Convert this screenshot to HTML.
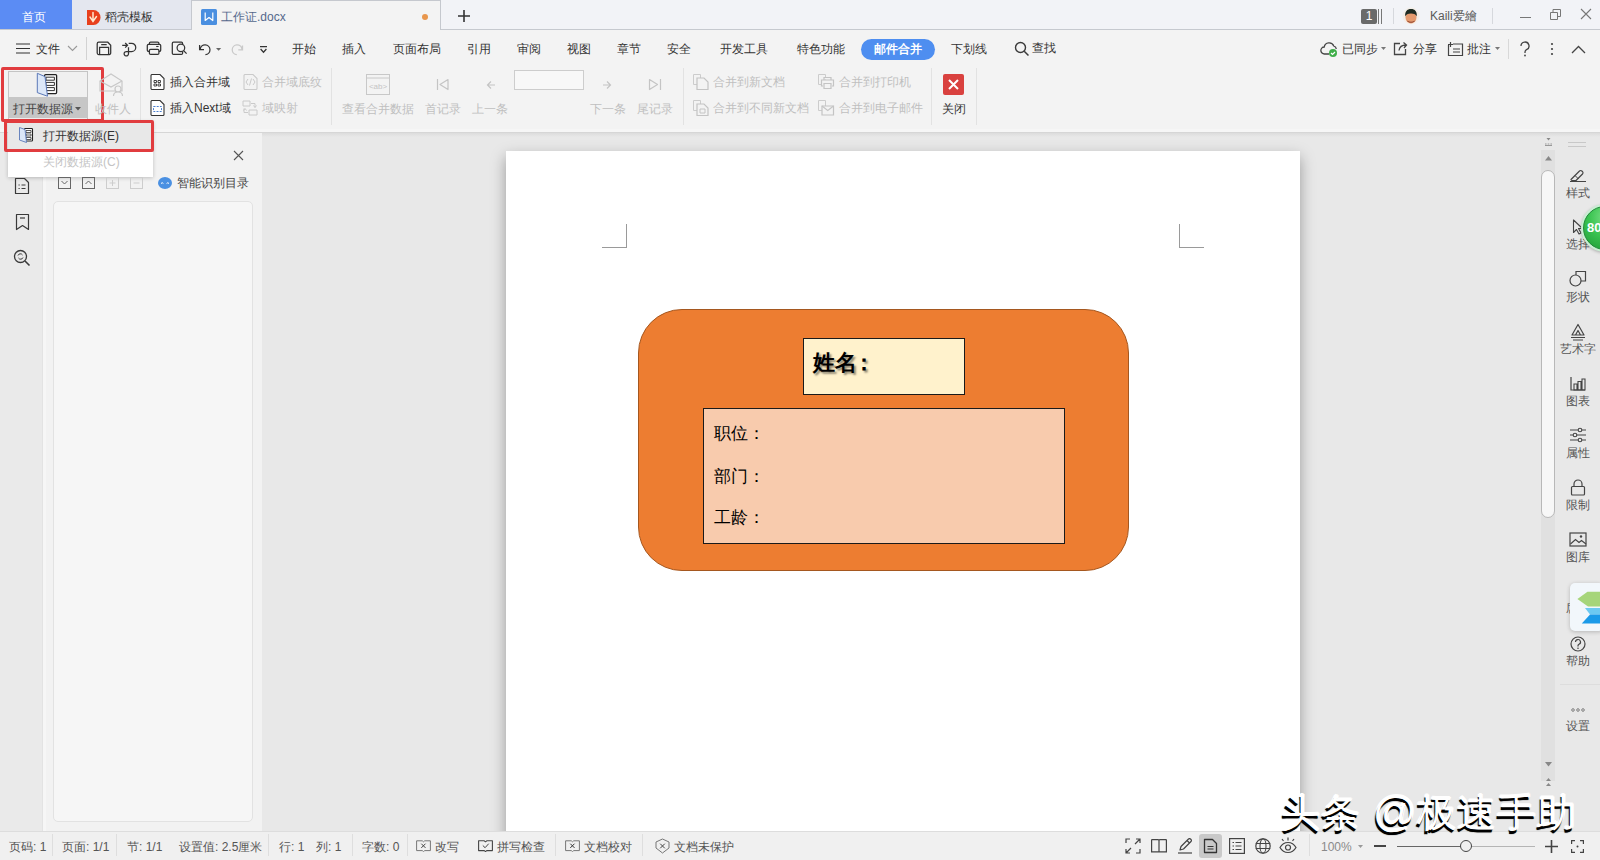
<!DOCTYPE html>
<html><head><meta charset="utf-8">
<style>
*{margin:0;padding:0;box-sizing:border-box}
html,body{width:1600px;height:860px;overflow:hidden;background:#f3f3f3;font-family:"Liberation Sans",sans-serif;color:#333}
.a{position:absolute}
.t{position:absolute;white-space:nowrap;font-size:12px;line-height:14px}
#tabbar{left:0;top:0;width:1600px;height:30px;background:#f2f3f7;border-bottom:1px solid #c6c9cf}
#home{left:0;top:0;width:72px;height:29px;background:#5b8cf4}
#tab2{left:72px;top:0;width:120px;height:29px;background:#e4e7ef}
#tab3{left:191px;top:0;width:250px;height:30px;background:#f3f3f3;border-left:1px solid #c5c8ce;border-right:1px solid #c5c8ce;border-top:1px solid #c5c8ce}
#tool{left:0;top:30px;width:1600px;height:103px;background:#f3f3f3;border-bottom:1px solid #d6d6d6;box-shadow:inset 0 -3px 0 #f6f6f6}
#toolsh{left:262px;top:133px;width:1338px;height:4px;background:linear-gradient(#dcdcdc,rgba(230,230,230,0))}
#lstrip{left:0;top:133px;width:43px;height:698px;background:#eaeaea;border-right:1px solid #e3e3e3}
#nav{left:43px;top:133px;width:219px;height:698px;background:#f2f2f2;box-shadow:inset 3px 0 0 #f6f6f6}
#navbox{left:53px;top:201px;width:200px;height:621px;background:#f6f6f6;border:1px solid #e2e2e2;border-radius:5px}
#doc{left:262px;top:133px;width:1338px;height:698px;background:#e8e8e8}
#page{left:506px;top:151px;width:794px;height:700px;background:#fff;box-shadow:0 6px 14px rgba(0,0,0,.34)}
#scroll{left:1540px;top:132px;width:18px;height:699px;background:#e6e6e6}
#rpanel{left:1558px;top:132px;width:42px;height:699px;background:#f0f0f0;border-left:1px solid #dedede}
#status{left:0;top:831px;width:1600px;height:29px;background:#f0f0f0;border-top:1px solid #dddddd}
.g{color:#bbb}
</style></head><body>
<div id="tool" class="a"></div>
<div id="lstrip" class="a"></div>
<div id="nav" class="a"></div>
<div id="navbox" class="a"></div>
<div id="doc" class="a"></div>
<div id="page" class="a"></div>
<div id="toolsh" class="a"></div>
<div id="status" class="a"></div>
<!-- TAB BAR -->
<div id="tabbar" class="a"></div>
<div id="home" class="a"></div>
<div class="t" style="left:22px;top:10px;font-size:12px;color:#fff">首页</div>
<div id="tab2" class="a"></div>
<svg class="a" style="left:87px;top:10px" width="14" height="15" viewBox="0 0 14 15"><path d="M0 0h6.5a7 7.5 0 0 1 0 15H0z" fill="#e8401c"/><path d="M6 2.5v8M3 7l3 4.5 3.5-5" stroke="#ffe9cf" stroke-width="1.5" fill="none" stroke-linecap="round"/></svg>
<div class="t" style="left:105px;top:10px;font-size:12px;color:#333">稻壳模板</div>
<div id="tab3" class="a"></div>
<svg class="a" style="left:201px;top:9px" width="16" height="16" viewBox="0 0 16 16"><rect x="0" y="0" width="16" height="16" rx="1.5" fill="#4a8fe0"/><path d="M4.2 3.5v8L8 8.5l3.8 3v-8" stroke="#fff" stroke-width="1.2" fill="none" stroke-linejoin="round"/></svg>
<div class="t" style="left:221px;top:10px;font-size:12px;color:#55688c">工作证.docx</div>
<div class="a" style="left:422px;top:14px;width:6px;height:6px;border-radius:50%;background:#e8964c"></div>
<svg class="a" style="left:457px;top:9px" width="14" height="14" viewBox="0 0 14 14"><path d="M7 1v12M1 7h12" stroke="#333" stroke-width="1.6"/></svg>
<!-- right tab bar -->
<div class="a" style="left:1361px;top:9px;width:16px;height:15px;background:#6a6a6a;border-radius:2px;color:#fff;font-size:12px;line-height:15px;text-align:center">1</div>
<div class="a" style="left:1378px;top:9px;width:1px;height:15px;background:#777"></div>
<div class="a" style="left:1381px;top:9px;width:1px;height:15px;background:#777"></div>
<div class="a" style="left:1393px;top:8px;width:1px;height:16px;background:#d6d8dd"></div>
<svg class="a" style="left:1402px;top:7px" width="18" height="18" viewBox="0 0 18 18"><circle cx="9" cy="9" r="8.5" fill="#f4eee8"/><ellipse cx="9" cy="10.5" rx="5.5" ry="6" fill="#e49a6e"/><path d="M3.2 9.5C2.8 4.5 5 2 9 2s6.2 2.5 5.8 7.5c-.8-2-2.5-3-5.8-3s-5 1-5.8 3z" fill="#1d2a22"/><path d="M5 13.5c1.2 2.8 6.8 2.8 8 0c-1 1-2.5 1.2-4 1.2s-3-.2-4-1.2z" fill="#6e2218"/></svg>
<div class="t" style="left:1430px;top:9px;font-size:12px;color:#5a5a5a">Kaili爱繪</div>
<div class="a" style="left:1492px;top:8px;width:1px;height:16px;background:#d6d8dd"></div>
<div class="a" style="left:1520px;top:17px;width:11px;height:1px;background:#777"></div>
<svg class="a" style="left:1549px;top:8px" width="13" height="13" viewBox="0 0 13 13"><path d="M1.5 4.5h7v7h-7zM4 4.5V1.5h7.5v7H8.5" stroke="#777" stroke-width="1" fill="none"/></svg>
<svg class="a" style="left:1580px;top:8px" width="12" height="12" viewBox="0 0 12 12"><path d="M1 1l10 10M11 1 1 11" stroke="#777" stroke-width="1.1"/></svg>
<!-- MENU ROW -->
<svg class="a" style="left:16px;top:43px" width="14" height="11" viewBox="0 0 14 11"><path d="M0 1h14M0 5.5h14M0 10h14" stroke="#333" stroke-width="1.2"/></svg>
<div class="t" style="left:36px;top:42px;color:#333">文件</div>
<svg class="a" style="left:67px;top:45px" width="11" height="7" viewBox="0 0 11 7"><path d="M1 1l4.5 4.5L10 1" stroke="#999" stroke-width="1.1" fill="none"/></svg>
<div class="a" style="left:86px;top:37px;width:1px;height:23px;background:#d2d2d2"></div>
<svg class="a" style="left:90px;top:36px" width="190" height="24" viewBox="90 36 190 24" fill="none" stroke="#333" stroke-width="1.25">
<path d="M97.2 43.7a1.5 1.5 0 0 1 1.5-1.5H107.8L110.7 45.3V53a1.5 1.5 0 0 1-1.5 1.5H98.7a1.5 1.5 0 0 1-1.5-1.5z"/><path d="M101.2 44.6H106.7M99.6 54.5V47.4H108.6V54.5"/>
<path d="M122.2 45.3H127.4M125.2 43 127.5 45.3 125.2 47.6"/><path d="M128.7 43.3H131.6A4.15 4.15 0 0 1 131.6 51.6H126.6A2.2 2.2 0 1 0 128.5 54V47.2"/>
<path d="M149.4 44.4V43.4a1.2 1.2 0 0 1 1.2-1.2H157.7a1.2 1.2 0 0 1 1.2 1.2V44.4"/><path d="M149.3 51.3H148.5a1.2 1.2 0 0 1-1.2-1.2V45.6a1.2 1.2 0 0 1 1.2-1.2H159.5a1.2 1.2 0 0 1 1.2 1.2V50.1a1.2 1.2 0 0 1-1.2 1.2H158.9"/><rect x="149.4" y="49.4" width="9.5" height="5" rx="1.2"/><path d="M156.2 46.5H158.6" stroke-width="1.1"/>
<path d="M182.6 44.5V43.4a1.2 1.2 0 0 0-1.2-1.2H173.5a1.2 1.2 0 0 0-1.2 1.2V53.2a1.2 1.2 0 0 0 1.2 1.2H181.4a1.2 1.2 0 0 0 1.2-1.2V52"/><circle cx="180.9" cy="47.8" r="3.8"/><path d="M183.6 50.6 186.6 53.6"/>
<path d="M199.6 45V49.7H204"/><path d="M200.2 49.2A4.9 4.9 0 1 1 205.4 54.6"/>
<path d="M216 48H221.2L218.6 50.8z" fill="#666" stroke="none"/>
<path d="M242.5 45.5V49.9H238.3M242 49.2A4.9 4.9 0 1 0 236.8 54.6" stroke="#c9c9c9"/>
<path d="M260 46.5H267M260.6 49 263.5 52.2 266.4 49"/>
</svg>
<div class="t" style="left:292px;top:42px">开始</div>
<div class="t" style="left:342px;top:42px">插入</div>
<div class="t" style="left:393px;top:42px">页面布局</div>
<div class="t" style="left:467px;top:42px">引用</div>
<div class="t" style="left:517px;top:42px">审阅</div>
<div class="t" style="left:567px;top:42px">视图</div>
<div class="t" style="left:617px;top:42px">章节</div>
<div class="t" style="left:667px;top:42px">安全</div>
<div class="t" style="left:720px;top:42px">开发工具</div>
<div class="t" style="left:797px;top:42px">特色功能</div>
<div class="a" style="left:861px;top:39px;width:74px;height:21px;border-radius:11px;background:#4e8ef0"></div>
<div class="t" style="left:874px;top:42px;color:#fff;font-weight:bold">邮件合并</div>
<div class="t" style="left:951px;top:42px">下划线</div>
<svg class="a" style="left:1014px;top:41px" width="16" height="16" viewBox="0 0 16 16"><circle cx="6.5" cy="6.5" r="5" stroke="#3a3a3a" stroke-width="1.4" fill="none"/><path d="M10.2 10.2l4.3 4.3" stroke="#3a3a3a" stroke-width="1.5"/></svg>
<div class="t" style="left:1032px;top:41px">查找</div>
<!-- right -->
<svg class="a" style="left:1320px;top:41px" width="18" height="16" viewBox="0 0 18 16"><path d="M9 13H4.5a3.5 3.5 0 0 1-.3-7A5 5 0 0 1 13.8 5a3.5 3.5 0 0 1 2.5 3" stroke="#444" stroke-width="1.3" fill="none"/><circle cx="13" cy="12" r="4" fill="#3fae49"/><path d="M11 12l1.5 1.5 2.5-2.5" stroke="#fff" stroke-width="1.2" fill="none"/></svg>
<div class="t" style="left:1342px;top:42px">已同步</div>
<svg class="a" style="left:1381px;top:47px" width="5" height="4" viewBox="0 0 5 4"><path d="M0 0h5L2.5 3z" fill="#777"/></svg>
<svg class="a" style="left:1393px;top:41px" width="16" height="15" viewBox="0 0 16 15"><path d="M7 2.5H1.5v11h11V8" stroke="#444" stroke-width="1.3" fill="none"/><path d="M6 9.5C6.5 5.5 9 4 13 4M10.5 1.5 13.5 4 11 7" stroke="#444" stroke-width="1.3" fill="none"/></svg>
<div class="t" style="left:1413px;top:42px">分享</div>
<svg class="a" style="left:1447px;top:41px" width="17" height="16" viewBox="0 0 17 16"><path d="M1.5 4v10.5h14V3H6M3.5 1v5M1 3.5h5M6 8h7M6 11h7" stroke="#444" stroke-width="1.2" fill="none"/></svg>
<div class="t" style="left:1467px;top:42px">批注</div>
<svg class="a" style="left:1495px;top:47px" width="5" height="4" viewBox="0 0 5 4"><path d="M0 0h5L2.5 3z" fill="#777"/></svg>
<div class="a" style="left:1508px;top:39px;width:1px;height:20px;background:#d8d8d8"></div>
<svg class="a" style="left:1519px;top:41px" width="12" height="16" viewBox="0 0 12 16"><path d="M2 5a4 4 0 1 1 5.5 3.7c-1 .5-1.5 1.2-1.5 2.3v1" stroke="#444" stroke-width="1.3" fill="none"/><circle cx="6" cy="14.5" r=".9" fill="#444"/></svg>
<svg class="a" style="left:1550px;top:42px" width="4" height="14" viewBox="0 0 4 14"><circle cx="2" cy="2" r="1.1" fill="#444"/><circle cx="2" cy="7" r="1.1" fill="#444"/><circle cx="2" cy="12" r="1.1" fill="#444"/></svg>
<svg class="a" style="left:1571px;top:45px" width="15" height="9" viewBox="0 0 15 9"><path d="M1 8l6.5-6.5L14 8" stroke="#444" stroke-width="1.3" fill="none"/></svg>
<!-- RIBBON -->
<div class="a" style="left:8px;top:71px;width:80px;height:48px;background:#f0f0f0;border:1px solid #c4c4c4;border-bottom:none"></div>
<div class="a" style="left:9px;top:97px;width:78px;height:21px;background:#c6c6c6"></div>
<svg class="a" style="left:30px;top:68px" width="36" height="32" viewBox="0 0 36 32"><rect x="14.6" y="6.6" width="12" height="19" rx="1" stroke="#222" stroke-width="1.3" fill="#fff"/><path d="M16 9.2h8.4v3H16zM16 14.4h8.4v3H16zM16 19.6h8.4v3H16z" stroke="#333" stroke-width="1" fill="none"/><path d="M7.3 5.3 15 8.6l2.5 19.6-10.2-3.6z" fill="#dce7f8" stroke="#5a78b8" stroke-width="1"/></svg>
<div class="t" style="left:13px;top:102px;color:#444">打开数据源</div>
<svg class="a" style="left:75px;top:107px" width="6" height="4" viewBox="0 0 6 4"><path d="M0 0h6L3 3.5z" fill="#555"/></svg>
<div class="a" style="left:1px;top:67px;width:103px;height:55px;border:3px solid #e13c3f;border-radius:2px"></div>
<!-- recipient gray -->
<svg class="a" style="left:98px;top:71px" width="26" height="26" viewBox="0 0 26 26"><path d="M2 10l11-7 11 7v10H2z" stroke="#c8c8c8" stroke-width="1.2" fill="none"/><path d="M2 10l11 6 11-6" stroke="#c8c8c8" stroke-width="1.2" fill="none"/><circle cx="20" cy="18" r="3" stroke="#c8c8c8" stroke-width="1.2" fill="#f3f3f3"/><path d="M15.5 25c0-2.5 2-4 4.5-4s4.5 1.5 4.5 4" stroke="#c8c8c8" stroke-width="1.2" fill="#f3f3f3"/></svg>
<div class="t" style="left:95px;top:102px;color:#c0c0c0">收件人</div>
<div class="a" style="left:140px;top:68px;width:1px;height:57px;background:#e2e2e2"></div>
<!-- insert merge field -->
<svg class="a" style="left:150px;top:74px" width="15" height="16" viewBox="0 0 15 16"><path d="M1 1.5a1 1 0 0 1 1-1h8l4 4v10a1 1 0 0 1-1 1H2a1 1 0 0 1-1-1z" stroke="#333" stroke-width="1.1" fill="#fff"/><path d="M4 6.5h2.5v2H4zM8 6.5h2.5v2H8zM4 10h2.5v2H4zM8 10h2.5v2H8z" stroke="#333" stroke-width=".9" fill="none"/></svg>
<div class="t" style="left:170px;top:75px">插入合并域</div>
<svg class="a" style="left:150px;top:100px" width="15" height="16" viewBox="0 0 15 16"><path d="M1 1.5a1 1 0 0 1 1-1h8l4 4v10a1 1 0 0 1-1 1H2a1 1 0 0 1-1-1z" stroke="#333" stroke-width="1.1" fill="#fff"/><path d="M3.5 6.5h8v5h-8z" stroke="#4a7fcf" stroke-width="1" stroke-dasharray="2 1.2" fill="none"/></svg>
<div class="t" style="left:170px;top:101px">插入Next域</div>
<svg class="a" style="left:243px;top:74px" width="15" height="16" viewBox="0 0 15 16"><path d="M1 1.5a1 1 0 0 1 1-1h8l4 4v10a1 1 0 0 1-1 1H2a1 1 0 0 1-1-1z" stroke="#cacaca" stroke-width="1.1" fill="none"/><path d="M5 5 3 8l2 3M10 5l2 3-2 3M8.5 4.5l-2 7" stroke="#cacaca" stroke-width="1" fill="none"/></svg>
<div class="t" style="left:262px;top:75px;color:#bfbfbf">合并域底纹</div>
<svg class="a" style="left:242px;top:100px" width="16" height="16" viewBox="0 0 16 16"><path d="M1 1h7v5H1zM7 10h8v5H7zM9 3.5h4v4M11.5 5.5 13 7.5l1.5-2M6 12.5H2v-4M4.5 10.5 3 8.5l-1.5 2" stroke="#cacaca" stroke-width="1" fill="none"/></svg>
<div class="t" style="left:262px;top:101px;color:#bfbfbf">域映射</div>
<div class="a" style="left:331px;top:68px;width:1px;height:57px;background:#e2e2e2"></div>
<svg class="a" style="left:366px;top:74px" width="24" height="21" viewBox="0 0 24 21"><rect x=".5" y=".5" width="23" height="20" stroke="#c8c8c8" stroke-width="1" fill="none"/><path d="M.5 4h23" stroke="#c8c8c8"/><text x="12" y="15" font-size="8" text-anchor="middle" fill="#c4c4c4" font-family="Liberation Sans">&lt;ab&gt;</text></svg>
<div class="t" style="left:342px;top:102px;color:#bfbfbf">查看合并数据</div>
<svg class="a" style="left:436px;top:78px" width="13" height="13" viewBox="0 0 13 13"><path d="M1.5 1v11M12 1.5 4 6.5l8 5z" stroke="#c4c4c4" stroke-width="1.2" fill="none" stroke-linejoin="round"/></svg>
<div class="t" style="left:425px;top:102px;color:#bfbfbf">首记录</div>
<svg class="a" style="left:486px;top:80px" width="10" height="10" viewBox="0 0 10 10"><path d="M9 5H1.5M5 1.5 1.5 5 5 8.5" stroke="#c4c4c4" stroke-width="1.2" fill="none"/></svg>
<div class="t" style="left:472px;top:102px;color:#bfbfbf">上一条</div>
<div class="a" style="left:514px;top:70px;width:70px;height:20px;background:#f8f8f8;border:1px solid #cdcdcd"></div>
<svg class="a" style="left:602px;top:80px" width="10" height="10" viewBox="0 0 10 10"><path d="M1 5h7.5M5 1.5 8.5 5 5 8.5" stroke="#c4c4c4" stroke-width="1.2" fill="none"/></svg>
<div class="t" style="left:590px;top:102px;color:#bfbfbf">下一条</div>
<svg class="a" style="left:648px;top:78px" width="14" height="13" viewBox="0 0 14 13"><path d="M12.5 1v11M1.5 1.5l8 5-8 5z" stroke="#c4c4c4" stroke-width="1.2" fill="none" stroke-linejoin="round"/></svg>
<div class="t" style="left:637px;top:102px;color:#bfbfbf">尾记录</div>
<div class="a" style="left:683px;top:68px;width:1px;height:57px;background:#e2e2e2"></div>
<svg class="a" style="left:692px;top:73px" width="18" height="17" viewBox="0 0 18 17"><path d="M1.5 1.5h7v10h-7z" stroke="#cccccc" stroke-width="1" fill="none"/><path d="M5 5h7l4 4v7.5H5z" stroke="#c4c4c4" stroke-width="1.2" fill="#f3f3f3"/></svg>
<div class="t" style="left:713px;top:75px;color:#bfbfbf">合并到新文档</div>
<svg class="a" style="left:692px;top:99px" width="18" height="17" viewBox="0 0 18 17"><path d="M1.5 1.5h7v10h-7z" stroke="#cccccc" stroke-width="1" fill="none"/><path d="M5 5h7l4 4v7.5H5z" stroke="#c4c4c4" stroke-width="1.2" fill="#f3f3f3"/><path d="M8 10h5v4H8z" stroke="#c4c4c4" fill="none"/></svg>
<div class="t" style="left:713px;top:101px;color:#bfbfbf">合并到不同新文档</div>
<svg class="a" style="left:817px;top:73px" width="18" height="17" viewBox="0 0 18 17"><path d="M1.5 1.5h7v10h-7z" stroke="#cccccc" stroke-width="1" fill="none"/><path d="M7 6.5v-2h7v2M6 13H4.5V7h12v6H15M7 10.5h7v5H7z" stroke="#c4c4c4" stroke-width="1.2" fill="#f3f3f3"/></svg>
<div class="t" style="left:839px;top:75px;color:#bfbfbf">合并到打印机</div>
<svg class="a" style="left:817px;top:99px" width="18" height="17" viewBox="0 0 18 17"><path d="M1.5 1.5h7v10h-7z" stroke="#cccccc" stroke-width="1" fill="none"/><path d="M5 7h11.5v9H5z" stroke="#c4c4c4" stroke-width="1.2" fill="#f3f3f3"/><path d="M5 7l5.75 4.5L16.5 7" stroke="#c4c4c4" stroke-width="1.1" fill="none"/></svg>
<div class="t" style="left:839px;top:101px;color:#bfbfbf">合并到电子邮件</div>
<div class="a" style="left:931px;top:68px;width:1px;height:57px;background:#e2e2e2"></div>
<div class="a" style="left:943px;top:74px;width:21px;height:21px;background:#d9413f;border-radius:2px"></div>
<svg class="a" style="left:947px;top:78px" width="13" height="13" viewBox="0 0 13 13"><path d="M2 2l9 9M11 2 2 11" stroke="#fff" stroke-width="2"/></svg>
<div class="t" style="left:942px;top:102px">关闭</div>
<div class="a" style="left:976px;top:68px;width:1px;height:57px;background:#e2e2e2"></div>
<!-- dropdown menu -->
<div class="a" style="left:8px;top:121px;width:145px;height:56px;background:#fff;box-shadow:0 1px 4px rgba(0,0,0,.22)"></div>
<div class="a" style="left:8px;top:123px;width:145px;height:26px;background:#e8e8e8"></div>
<svg class="a" style="left:17px;top:126px" width="18" height="18" viewBox="0 0 18 18"><rect x="7.5" y="2.5" width="8" height="12.5" rx=".8" stroke="#222" stroke-width="1.1" fill="#fff"/><path d="M9 4.5h5v2H9zM9 8h5v2H9zM9 11.5h5v2H9z" stroke="#333" stroke-width=".8" fill="none"/><path d="M2.5 1.5 8 3.5l1.5 13-7-2.5z" fill="#dce7f8" stroke="#5a78b8" stroke-width=".9"/></svg>
<div class="t" style="left:43px;top:129px;color:#333">打开数据源(E)</div>
<div class="t" style="left:43px;top:155px;color:#c4c4c4">关闭数据源(C)</div>
<div class="a" style="left:4px;top:120px;width:150px;height:32px;border:3px solid #e13c3f;border-radius:2px"></div>
<!-- LEFT STRIP ICONS -->
<svg class="a" style="left:14px;top:177px" width="16" height="18" viewBox="0 0 16 18"><path d="M1.5 1.5h9l4 4v11h-13z" stroke="#3a3a3a" stroke-width="1.2" fill="none" stroke-linejoin="round"/><path d="M4.5 8h1.2M4.5 11.5h1.2M7.5 8h4M7.5 11.5h4" stroke="#3a3a3a" stroke-width="1.2"/></svg>
<svg class="a" style="left:15px;top:213px" width="15" height="18" viewBox="0 0 15 18"><path d="M1.5 1.5h12v15l-6-4-6 4z" stroke="#3a3a3a" stroke-width="1.2" fill="none" stroke-linejoin="round"/><path d="M5 5h5" stroke="#3a3a3a" stroke-width="1.2"/></svg>
<svg class="a" style="left:13px;top:249px" width="18" height="18" viewBox="0 0 18 18"><circle cx="7.5" cy="7.5" r="6" stroke="#3a3a3a" stroke-width="1.3" fill="none"/><path d="M12 12l4.5 4.5" stroke="#3a3a3a" stroke-width="1.6"/><path d="M5 6.5a2.5 2.5 0 0 1 4.5-.5M10 8.5a2.5 2.5 0 0 1-4.5.5" stroke="#3a3a3a" stroke-width="1" fill="none"/></svg>
<!-- NAV HEADER -->
<svg class="a" style="left:233px;top:150px" width="11" height="11" viewBox="0 0 11 11"><path d="M1 1l9 9M10 1 1 10" stroke="#555" stroke-width="1.1"/></svg>
<svg class="a" style="left:58px;top:177px" width="13" height="12" viewBox="0 0 13 12"><rect x=".5" y=".5" width="12" height="11" stroke="#666" fill="none"/><path d="M3.5 4l3 3 3-3" stroke="#666" fill="none"/></svg>
<svg class="a" style="left:82px;top:177px" width="13" height="12" viewBox="0 0 13 12"><rect x=".5" y=".5" width="12" height="11" stroke="#666" fill="none"/><path d="M3.5 7l3-3 3 3" stroke="#666" fill="none"/></svg>
<svg class="a" style="left:106px;top:177px" width="13" height="12" viewBox="0 0 13 12"><rect x=".5" y=".5" width="12" height="11" stroke="#cdcdcd" fill="none"/><path d="M6.5 3v6M3.5 6h6" stroke="#cdcdcd"/></svg>
<svg class="a" style="left:130px;top:177px" width="13" height="12" viewBox="0 0 13 12"><rect x=".5" y=".5" width="12" height="11" stroke="#cdcdcd" fill="none"/><path d="M3.5 6h6" stroke="#cdcdcd"/></svg>
<svg class="a" style="left:158px;top:177px" width="14" height="12" viewBox="0 0 14 12"><ellipse cx="7" cy="6" rx="7" ry="6" fill="#4a90e2"/><path d="M3 6.5q1.2-1.5 2.4 0M8.6 6.5q1.2-1.5 2.4 0" stroke="#fff" stroke-width="1" fill="none"/></svg>
<div class="t" style="left:177px;top:176px;color:#444">智能识别目录</div>
<!-- PAGE CONTENT -->
<div class="a" style="left:626px;top:224px;width:1px;height:24px;background:#9a9a9a"></div>
<div class="a" style="left:602px;top:247px;width:25px;height:1px;background:#9a9a9a"></div>
<div class="a" style="left:1179px;top:224px;width:1px;height:24px;background:#9a9a9a"></div>
<div class="a" style="left:1179px;top:247px;width:25px;height:1px;background:#9a9a9a"></div>
<div class="a" style="left:638px;top:309px;width:491px;height:262px;background:#ed7d31;border:1px solid #a5571f;border-radius:44px"></div>
<div class="a" style="left:803px;top:338px;width:162px;height:57px;background:#fff2cc;border:1px solid #1a1a1a"></div>
<div class="t" style="left:813px;top:350px;font-size:22px;line-height:26px;font-weight:bold;color:#000;text-shadow:2px 2px 2px rgba(0,0,0,.45)">姓名<span style="margin-left:-4px">：</span></div>
<div class="a" style="left:703px;top:408px;width:362px;height:136px;background:#f8cbad;border:1px solid #1a1a1a"></div>
<div class="t" style="left:714px;top:424px;font-size:17px;line-height:20px;color:#000">职位：</div>
<div class="t" style="left:714px;top:467px;font-size:17px;line-height:20px;color:#000">部门：</div>
<div class="t" style="left:714px;top:508px;font-size:17px;line-height:20px;color:#000">工龄：</div>
<!-- SCROLLBAR -->
<div class="a" style="left:1541px;top:150px;width:14px;height:631px;background:#e0e0e0"></div>
<svg class="a" style="left:1544px;top:137px" width="9" height="10" viewBox="0 0 9 10"><path d="M2.5 1h4L4.5 3.5z" fill="#888"/><path d="M1 7h1.6M3.7 7h1.6M6.4 7H8M1 8.5h7" stroke="#999"/></svg>
<svg class="a" style="left:1545px;top:156px" width="7" height="5" viewBox="0 0 7 5"><path d="M0 4.5h7L3.5 0z" fill="#888"/></svg>
<div class="a" style="left:1541px;top:170px;width:14px;height:348px;background:#f7f7f7;border:1px solid #b8b8b8;border-radius:7px"></div>
<svg class="a" style="left:1545px;top:762px" width="7" height="5" viewBox="0 0 7 5"><path d="M0 0h7L3.5 4.5z" fill="#888"/></svg>
<svg class="a" style="left:1544px;top:777px" width="9" height="10" viewBox="0 0 9 10"><path d="M2 4h5L4.5 1z" fill="#888"/><path d="M2 9h5L4.5 6z" fill="#888"/></svg>
<!-- RIGHT PANEL -->
<div class="a" style="left:1568px;top:142px;width:18px;height:1px;background:#c8c8c8"></div>
<div class="a" style="left:1568px;top:146px;width:18px;height:1px;background:#c8c8c8"></div>
<svg class="a" style="left:1569px;top:168px" width="18" height="15" viewBox="0 0 18 15"><path d="M2 11.5 10.5 3a1.6 1.6 0 0 1 2.3 0l.7.7a1.6 1.6 0 0 1 0 2.3L7 12.5H3z" stroke="#444" stroke-width="1.2" fill="none" stroke-linejoin="round"/><path d="M1 13.5h16M6 7.5l3.5 3.5" stroke="#444" stroke-width="1"/></svg>
<div class="t" style="left:1566px;top:186px;color:#555">样式</div>
<svg class="a" style="left:1572px;top:219px" width="12" height="16" viewBox="0 0 12 16"><path d="M1.5 1v12.5l3-3 2.5 4.5 2-1-2.5-4.5h4z" stroke="#444" stroke-width="1.1" fill="none" stroke-linejoin="round"/></svg>
<div class="t" style="left:1566px;top:237px;color:#555">选择</div>
<svg class="a" style="left:1569px;top:270px" width="18" height="17" viewBox="0 0 18 17"><circle cx="6.5" cy="10.5" r="5.5" stroke="#444" stroke-width="1.2" fill="none"/><path d="M7 5V1.5h9.5V11H12" stroke="#444" stroke-width="1.2" fill="none"/></svg>
<div class="t" style="left:1566px;top:290px;color:#555">形状</div>
<svg class="a" style="left:1570px;top:323px" width="16" height="18" viewBox="0 0 16 18"><path d="M2 12 8 1.5 14 12zM5.5 12 8 7.5l2.5 4.5M1 14.5h14M3 17h10" stroke="#444" stroke-width="1.2" fill="none" stroke-linejoin="round"/></svg>
<div class="t" style="left:1560px;top:342px;color:#555">艺术字</div>
<svg class="a" style="left:1570px;top:376px" width="16" height="15" viewBox="0 0 16 15"><path d="M1 1v13h14" stroke="#444" stroke-width="1.2" fill="none"/><path d="M4 8h3v6H4zM8 5.5h3V14H8zM12 3h3v11h-3z" stroke="#444" stroke-width="1.1" fill="none"/></svg>
<div class="t" style="left:1566px;top:394px;color:#555">图表</div>
<svg class="a" style="left:1569px;top:427px" width="18" height="16" viewBox="0 0 18 16"><path d="M1 3h8M13 3h4M1 8h3M8 8h9M1 13h8M13 13h4" stroke="#444" stroke-width="1.2"/><circle cx="11" cy="3" r="1.8" stroke="#444" stroke-width="1.1" fill="none"/><circle cx="6" cy="8" r="1.8" stroke="#444" stroke-width="1.1" fill="none"/><circle cx="11" cy="13" r="1.8" stroke="#444" stroke-width="1.1" fill="none"/></svg>
<div class="t" style="left:1566px;top:446px;color:#555">属性</div>
<svg class="a" style="left:1570px;top:479px" width="16" height="17" viewBox="0 0 16 17"><path d="M4 7V5a4 4 0 0 1 8 0v2" stroke="#444" stroke-width="1.2" fill="none"/><rect x="1.5" y="7.5" width="13" height="8.5" rx="1" stroke="#444" stroke-width="1.2" fill="none"/></svg>
<div class="t" style="left:1566px;top:498px;color:#555">限制</div>
<svg class="a" style="left:1569px;top:532px" width="18" height="15" viewBox="0 0 18 15"><rect x="1" y="1" width="16" height="13" stroke="#444" stroke-width="1.2" fill="none"/><path d="M1.5 12 6.5 7.5l3.5 3 2.5-2 4.5 3.5" stroke="#444" stroke-width="1.1" fill="none"/><circle cx="12" cy="4.5" r="1.2" fill="#444"/></svg>
<div class="t" style="left:1566px;top:550px;color:#555">图库</div>
<div class="t" style="left:1566px;top:601px;color:#555">扂</div>
<div class="a" style="left:1570px;top:583px;width:34px;height:48px;background:#f2f7fb;border-radius:5px;box-shadow:0 1px 4px rgba(0,0,0,.22)"></div>
<svg class="a" style="left:1570px;top:583px" width="30" height="48" viewBox="0 0 30 48"><path d="M17.5 8.8H30v14.6H18L7.4 16z" fill="#a6d57a"/><path d="M15 25h15v6.6H20z" fill="#6cc9f2"/><path d="M20 31.6h10v8.9H11.8z" fill="#1b9ae8"/></svg>
<svg class="a" style="left:1570px;top:636px" width="16" height="16" viewBox="0 0 16 16"><circle cx="8" cy="8" r="7" stroke="#444" stroke-width="1.2" fill="none"/><path d="M5.5 6a2.5 2.5 0 1 1 3.5 2.3c-.6.3-1 .8-1 1.5v.7" stroke="#444" stroke-width="1.2" fill="none"/><circle cx="8" cy="12.2" r=".8" fill="#444"/></svg>
<div class="t" style="left:1566px;top:654px;color:#555">帮助</div>
<div class="a" style="left:1560px;top:684px;width:40px;height:1px;background:#dddddd"></div>
<svg class="a" style="left:1571px;top:708px" width="14" height="4" viewBox="0 0 14 4"><circle cx="2" cy="2" r="1.3" stroke="#666" stroke-width=".8" fill="none"/><circle cx="7" cy="2" r="1.3" stroke="#666" stroke-width=".8" fill="none"/><circle cx="12" cy="2" r="1.3" stroke="#666" stroke-width=".8" fill="none"/></svg>
<div class="t" style="left:1566px;top:719px;color:#555">设置</div>
<!-- green ball -->
<div class="a" style="left:1581px;top:204px;width:48px;height:48px;border-radius:50%;background:#c9eed3;box-shadow:0 1px 3px rgba(0,0,0,.25)"></div>
<div class="a" style="left:1583px;top:206px;width:44px;height:44px;border-radius:50%;background:radial-gradient(circle at 55% 25%,#7ee08a,#3cc552 45%,#27a93f 80%,#1d8a33);border:1px solid #208a38"></div>
<div class="t" style="left:1587px;top:221px;color:#fff;font-weight:bold;font-size:13px;line-height:14px">80</div>
<!-- STATUS BAR -->
<div class="t" style="left:9px;top:840px;color:#555">页码: 1</div>
<div class="a" style="left:52px;top:834px;width:1px;height:22px;background:#dedede"></div>
<div class="t" style="left:62px;top:840px;color:#555">页面: 1/1</div>
<div class="a" style="left:116px;top:834px;width:1px;height:22px;background:#dedede"></div>
<div class="t" style="left:127px;top:840px;color:#555">节: 1/1</div>
<div class="t" style="left:179px;top:840px;color:#555">设置值: 2.5厘米</div>
<div class="a" style="left:268px;top:834px;width:1px;height:22px;background:#dedede"></div>
<div class="t" style="left:279px;top:840px;color:#555">行: 1</div>
<div class="t" style="left:316px;top:840px;color:#555">列: 1</div>
<div class="a" style="left:352px;top:834px;width:1px;height:22px;background:#dedede"></div>
<div class="t" style="left:362px;top:840px;color:#555">字数: 0</div>
<div class="a" style="left:407px;top:834px;width:1px;height:22px;background:#dedede"></div>
<svg class="a" style="left:416px;top:840px" width="15" height="12" viewBox="0 0 15 12"><path d="M.6 .8H6.3L7.5 1.8 8.7 .8H14.4V10.6H8.7L7.5 11.6 6.3 10.6H.6Z" stroke="#777" stroke-width="1" fill="none" stroke-linejoin="round"/><path d="M5.3 3.7l4.2 4.2M9.5 3.7 5.3 7.9" stroke="#444" stroke-width="1"/></svg>
<div class="t" style="left:435px;top:840px;color:#555">改写</div>
<svg class="a" style="left:478px;top:840px" width="15" height="12" viewBox="0 0 15 12"><path d="M.6 .8H6.3L7.5 1.8 8.7 .8H14.4V10.6H8.7L7.5 11.6 6.3 10.6H.6Z" stroke="#444" stroke-width="1.1" fill="none" stroke-linejoin="round"/><path d="M4.8 5.5l2.3 2.2 3.6-4" stroke="#444" stroke-width="1" fill="none"/></svg>
<div class="t" style="left:497px;top:840px;color:#555">拼写检查</div>
<div class="a" style="left:555px;top:834px;width:1px;height:22px;background:#dedede"></div>
<svg class="a" style="left:565px;top:840px" width="15" height="12" viewBox="0 0 15 12"><path d="M.6 .8H6.3L7.5 1.8 8.7 .8H14.4V10.6H8.7L7.5 11.6 6.3 10.6H.6Z" stroke="#777" stroke-width="1" fill="none" stroke-linejoin="round"/><path d="M5.3 3.7l4.2 4.2M9.5 3.7 5.3 7.9" stroke="#333" stroke-width="1"/></svg>
<div class="t" style="left:584px;top:840px;color:#555">文档校对</div>
<div class="a" style="left:642px;top:834px;width:1px;height:22px;background:#dedede"></div>
<svg class="a" style="left:655px;top:838px" width="15" height="16" viewBox="0 0 15 16"><path d="M7.5 1 14 4v6L7.5 15 1 10V4z" stroke="#777" stroke-width="1" fill="none" stroke-linejoin="round"/><path d="M5.2 5.7l4.6 4.6M9.8 5.7 5.2 10.3" stroke="#444" stroke-width="1"/></svg>
<div class="t" style="left:674px;top:840px;color:#555">文档未保护</div>
<!-- status right -->
<svg class="a" style="left:1125px;top:838px" width="16" height="16" viewBox="0 0 16 16"><path d="M1 5V1h4M11 1h4v4M15 11v4h-4M5 15H1v-4M1.5 14.5 6 10M14.5 1.5 10 6" stroke="#444" stroke-width="1.2" fill="none"/></svg>
<svg class="a" style="left:1151px;top:839px" width="16" height="14" viewBox="0 0 16 14"><path d="M.6 .6h6.5a1 1 0 0 1 .9 .9v12M15.4 .6H8.9a1 1 0 0 0-.9 .9M.6 .6v12.3H15.4V.6" stroke="#444" stroke-width="1.2" fill="none"/></svg>
<svg class="a" style="left:1177px;top:838px" width="16" height="16" viewBox="0 0 16 16"><path d="M3 12l1-3.5L11.5 1a1.4 1.4 0 0 1 2 0l.5.5a1.4 1.4 0 0 1 0 2L6.5 11zM10 2.5l2.5 2.5" stroke="#444" stroke-width="1.2" fill="none" stroke-linejoin="round"/><path d="M1 15h14" stroke="#444" stroke-width="1.2"/></svg>
<div class="a" style="left:1199px;top:834px;width:23px;height:24px;background:#c9c9c9;border-radius:3px"></div>
<svg class="a" style="left:1203px;top:838px" width="15" height="16" viewBox="0 0 15 16"><path d="M1.5 1.5h8l4 4V14.5h-12z" stroke="#333" stroke-width="1.3" fill="none" stroke-linejoin="round"/><path d="M4.5 8.5h6M4.5 11h6" stroke="#333" stroke-width="1.2"/></svg>
<svg class="a" style="left:1229px;top:838px" width="16" height="16" viewBox="0 0 16 16"><rect x=".6" y=".6" width="14.8" height="14.8" stroke="#444" stroke-width="1.2" fill="none"/><path d="M3.5 4.5h1.5M6.5 4.5h6M3.5 8h1.5M6.5 8h6M3.5 11.5h1.5M6.5 11.5h6" stroke="#444" stroke-width="1.1"/></svg>
<svg class="a" style="left:1255px;top:838px" width="16" height="16" viewBox="0 0 16 16"><circle cx="8" cy="8" r="7.2" stroke="#444" stroke-width="1.2" fill="none"/><ellipse cx="8" cy="8" rx="3" ry="7.2" stroke="#444" stroke-width="1.1" fill="none"/><path d="M.8 5.5h14.4M.8 10.5h14.4" stroke="#444" stroke-width="1.1"/></svg>
<svg class="a" style="left:1279px;top:837px" width="18" height="17" viewBox="0 0 18 17"><path d="M1 10.5C3 7 6 5.5 9 5.5s6 1.5 8 5c-2 3.5-5 5-8 5s-6-1.5-8-5z" stroke="#444" stroke-width="1.2" fill="none"/><circle cx="9" cy="10.5" r="2.5" stroke="#444" stroke-width="1.2" fill="none"/><path d="M9 .5v3M3 2l1.5 2M15 2l-1.5 2" stroke="#444" stroke-width="1.2"/></svg>
<div class="a" style="left:1309px;top:834px;width:1px;height:22px;background:#dedede"></div>
<div class="t" style="left:1321px;top:840px;color:#8a8a8a">100%</div>
<svg class="a" style="left:1358px;top:845px" width="5" height="4" viewBox="0 0 5 4"><path d="M0 0h5L2.5 3z" fill="#999"/></svg>
<div class="a" style="left:1374px;top:845px;width:12px;height:2px;background:#444"></div>
<div class="a" style="left:1397px;top:846px;width:69px;height:1px;background:#666"></div>
<div class="a" style="left:1466px;top:846px;width:69px;height:1px;background:#b5b5b5"></div>
<div class="a" style="left:1460px;top:840px;width:12px;height:12px;border-radius:50%;background:#f0f0f0;border:1.3px solid #444"></div>
<svg class="a" style="left:1545px;top:840px" width="13" height="13" viewBox="0 0 13 13"><path d="M6.5 0v13M0 6.5h13" stroke="#444" stroke-width="1.6"/></svg>
<svg class="a" style="left:1571px;top:840px" width="13" height="13" viewBox="0 0 13 13"><path d="M.6 4V.6H4M9 .6h3.4V4M12.4 9v3.4H9M4 12.4H.6V9" stroke="#444" stroke-width="1.2" fill="none"/><circle cx="6.5" cy="6.5" r="1" fill="#444"/></svg>
<!-- WATERMARK -->
<div class="t" style="left:1281px;top:789px;font-size:39px;line-height:44px;color:#fff;letter-spacing:1px;text-shadow:-1px 3px 0 #000,1px 0 0 #fff,-1px 0 0 #fff,0 1px 0 #fff,0 -1px 0 #fff,-1px 3px 1px #000">头条 <span style="font-size:43px;letter-spacing:0">@</span>极速手助</div>
</body></html>
